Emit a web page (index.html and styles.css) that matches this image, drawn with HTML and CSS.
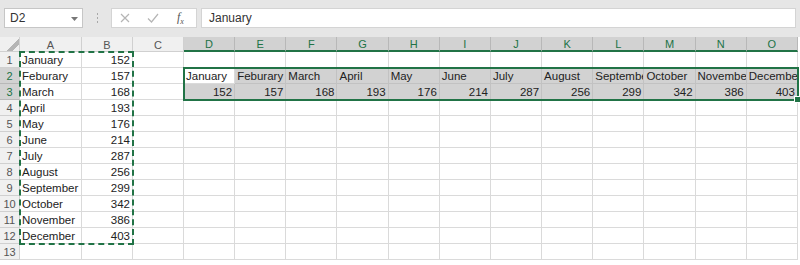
FILE: index.html
```html
<!DOCTYPE html>
<html lang="en">
<head>
    <meta charset="UTF-8">
    <title>Book1 - Excel</title>
    <link rel="stylesheet" href="styles.css">
</head>
<body>
    <div class="toolbar">
        <div class="name-box">
            <span>D2</span>
            <svg class="caret" width="7" height="4" viewBox="0 0 7 4"><path d="M0 0h7L3.5 4z" fill="#777"/></svg>
        </div>
        <div class="grip"><i></i><i></i><i></i></div>
        <div class="fx-buttons">
            <svg width="10" height="10" viewBox="0 0 10 10"><path d="M1 1l8 8M9 1L1 9" stroke="#b5b5b5" stroke-width="1.2"/></svg>
            <svg width="12" height="10" viewBox="0 0 12 10"><path d="M1 5.5l3.5 3.5L11 1" stroke="#b5b5b5" stroke-width="1.2" fill="none"/></svg>
            <span class="fx">f<sub>x</sub></span>
        </div>
        <div class="formula">January</div>
    </div>

    <div class="sheet">
        <div id="grid" class="grid"></div>
        <div class="ants"></div>
        <div class="selection"><span class="handle"></span></div>
    </div>

    <script>
        const months = ['January', 'Feburary', 'March', 'April', 'May', 'June', 'July',
            'August', 'September', 'October', 'November', 'December'];
        const values = [152, 157, 168, 193, 176, 214, 287, 256, 299, 342, 386, 403];
        const letters = 'ABCDEFGHIJKLMNO'.split('');
        const grid = document.getElementById('grid');

        function addCell(text, className) {
            const cell = document.createElement('div');
            cell.className = className;
            cell.textContent = text;
            grid.appendChild(cell);
        }

        // header row
        addCell('', 'corner');
        letters.forEach((letter, i) => {
            addCell(letter, i >= 3 ? 'col-head active' : 'col-head');
        });

        // rows 1..13
        for (let r = 1; r <= 13; r++) {
            addCell(r, r === 2 || r === 3 ? 'row-head active' : 'row-head');
            letters.forEach((letter, c) => {
                let text = '';
                let cls = 'cell';
                if (c === 0 && r <= 12) text = months[r - 1];
                if (c === 1 && r <= 12) { text = values[r - 1]; cls += ' num'; }
                if (r === 2 && c >= 3) {
                    text = months[c - 3];
                    if (c > 3) cls += ' sel';
                }
                if (r === 3 && c >= 3) {
                    text = values[c - 3];
                    cls += ' num sel';
                }
                addCell(text, cls);
            });
        }
    </script>
</body>
</html>
```

FILE: styles.css
```css
body {
    margin: 0;
    font-family: "Liberation Sans", Arial, sans-serif;
    background-color: #fff;
    width: 800px;
    height: 265px;
    overflow: hidden;
}
.toolbar {
    height: 37px;
    background-color: #e6e6e6;
    display: flex;
    align-items: flex-start;
    padding: 8px 4px 0 4px;
    box-sizing: border-box;
}
.name-box {
    width: 79px;
    height: 20px;
    box-sizing: border-box;
    background-color: #fff;
    border: 1px solid #c6c6c6;
    display: flex;
    align-items: center;
    justify-content: space-between;
    padding: 0 4px 0 5px;
    font-size: 12px;
    color: #333;
}
.caret {
    margin-top: 1px;
}
.grip {
    width: 28px;
    height: 20px;
    display: flex;
    flex-direction: column;
    align-items: center;
    justify-content: center;
    gap: 2px;
}
.grip i {
    width: 1px;
    height: 2px;
    background-color: #a8a8a8;
}
.fx-buttons {
    width: 86px;
    height: 20px;
    box-sizing: border-box;
    background-color: #fff;
    border: 1px solid #d4d4d4;
    display: flex;
    align-items: center;
    padding-left: 8px;
    gap: 17px;
}
.fx {
    font-family: "Liberation Serif", serif;
    font-style: italic;
    font-size: 12px;
    color: #555;
    margin-left: 1px;
}
.fx sub {
    font-size: 8px;
}
.formula {
    flex: 1;
    height: 20px;
    margin-left: 4px;
    box-sizing: border-box;
    background-color: #fff;
    border: 1px solid #d4d4d4;
    padding-left: 7px;
    font-size: 12px;
    line-height: 18px;
    color: #333;
}

.sheet {
    position: relative;
}
.grid {
    display: grid;
    grid-template-columns: 20px 62px 51px 51px repeat(12, 51.17px);
    grid-template-rows: 15px repeat(13, 16px);
    font-size: 11.5px;
    color: #222;
}
.corner,
.col-head,
.row-head {
    background-color: #f0f0f0;
    color: #555;
    font-size: 11px;
    border-right: 1px solid #d0d0d0;
    border-bottom: 1px solid #d0d0d0;
    box-sizing: border-box;
    display: flex;
    align-items: center;
    justify-content: center;
}
.col-head {
    padding-top: 1px;
}
.corner {
    background: linear-gradient(135deg, #f0f0f0 62%, #b5b5b5 62%, #b5b5b5 80%, #f0f0f0 80%);
}
.col-head.active {
    background-color: #d2d2d2;
    color: #217346;
    border-bottom: 2px solid #217346;
    border-right-color: #b8b8b8;
}
.row-head.active {
    background-color: #d2d2d2;
    color: #217346;
    border-bottom-color: #b8b8b8;
}
.cell {
    border-right: 1px solid #dadada;
    border-bottom: 1px solid #dadada;
    box-sizing: border-box;
    padding: 0 2px;
    line-height: 17px;
    white-space: nowrap;
    overflow: hidden;
}
.cell.num {
    text-align: right;
}
.cell.sel {
    background-color: #d2d2d2;
    border-color: #c2c2c2;
}

/* copy marquee round A1:B12 */
.ants {
    position: absolute;
    left: 19px;
    top: 14px;
    width: 115px;
    height: 194px;
    box-sizing: border-box;
    border: 2px dashed #217346;
}
/* selected range D2:O3 */
.selection {
    position: absolute;
    left: 183px;
    top: 30px;
    width: 616px;
    height: 34px;
    box-sizing: border-box;
    border: 2px solid #217346;
}
.handle {
    position: absolute;
    right: -4px;
    bottom: -4px;
    width: 5px;
    height: 5px;
    background-color: #217346;
    border: 1px solid #fff;
}
```
